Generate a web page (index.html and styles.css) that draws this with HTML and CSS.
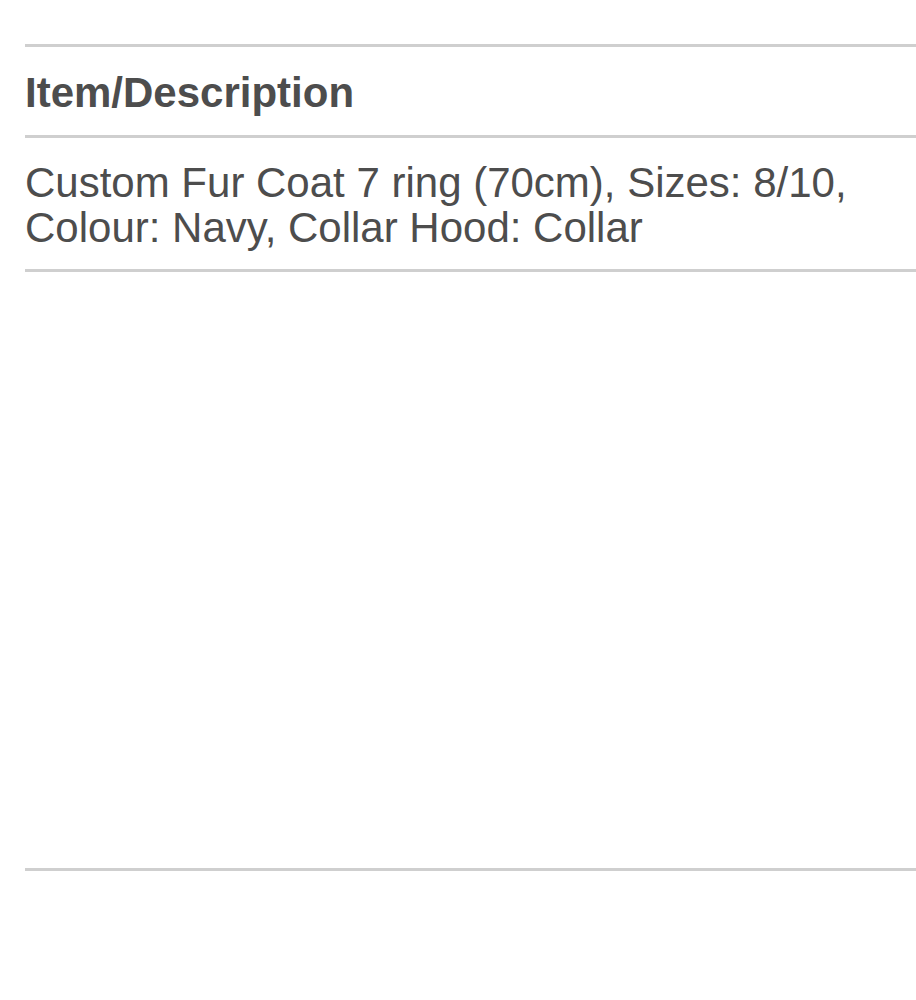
FILE: index.html
```html
<!DOCTYPE html>
<html lang="en">
<head>
<meta charset="utf-8">
<title>Item/Description</title>
<link rel="stylesheet" href="styles.css">
</head>
<body>
<div class="table">
  <div class="row head">Item/Description</div>
  <div class="row item">Custom Fur Coat 7 ring (70cm), Sizes: 8/10,<br>Colour: Navy, Collar Hood: Collar</div>
  <div class="row empty"></div>
</div>
</body>
</html>
```

FILE: styles.css
```css
html, body {
  margin: 0;
  padding: 0;
  background: #ffffff;
}
body {
  font-family: "Liberation Sans", Arial, sans-serif;
  color: #4d4d4d;
}
.table {
  margin-left: 25px;
  padding-top: 44px;
}
.row {
  border-top: 3px solid #cfcfcf;
  font-size: 42px;
}
.head {
  font-weight: bold;
  line-height: 48px;
  padding: 22px 0 18px;
}
.item {
  line-height: 45px;
  padding: 22px 0 19px;
}
.empty {
  height: 596px;
  border-bottom: 3px solid #cfcfcf;
}
```
